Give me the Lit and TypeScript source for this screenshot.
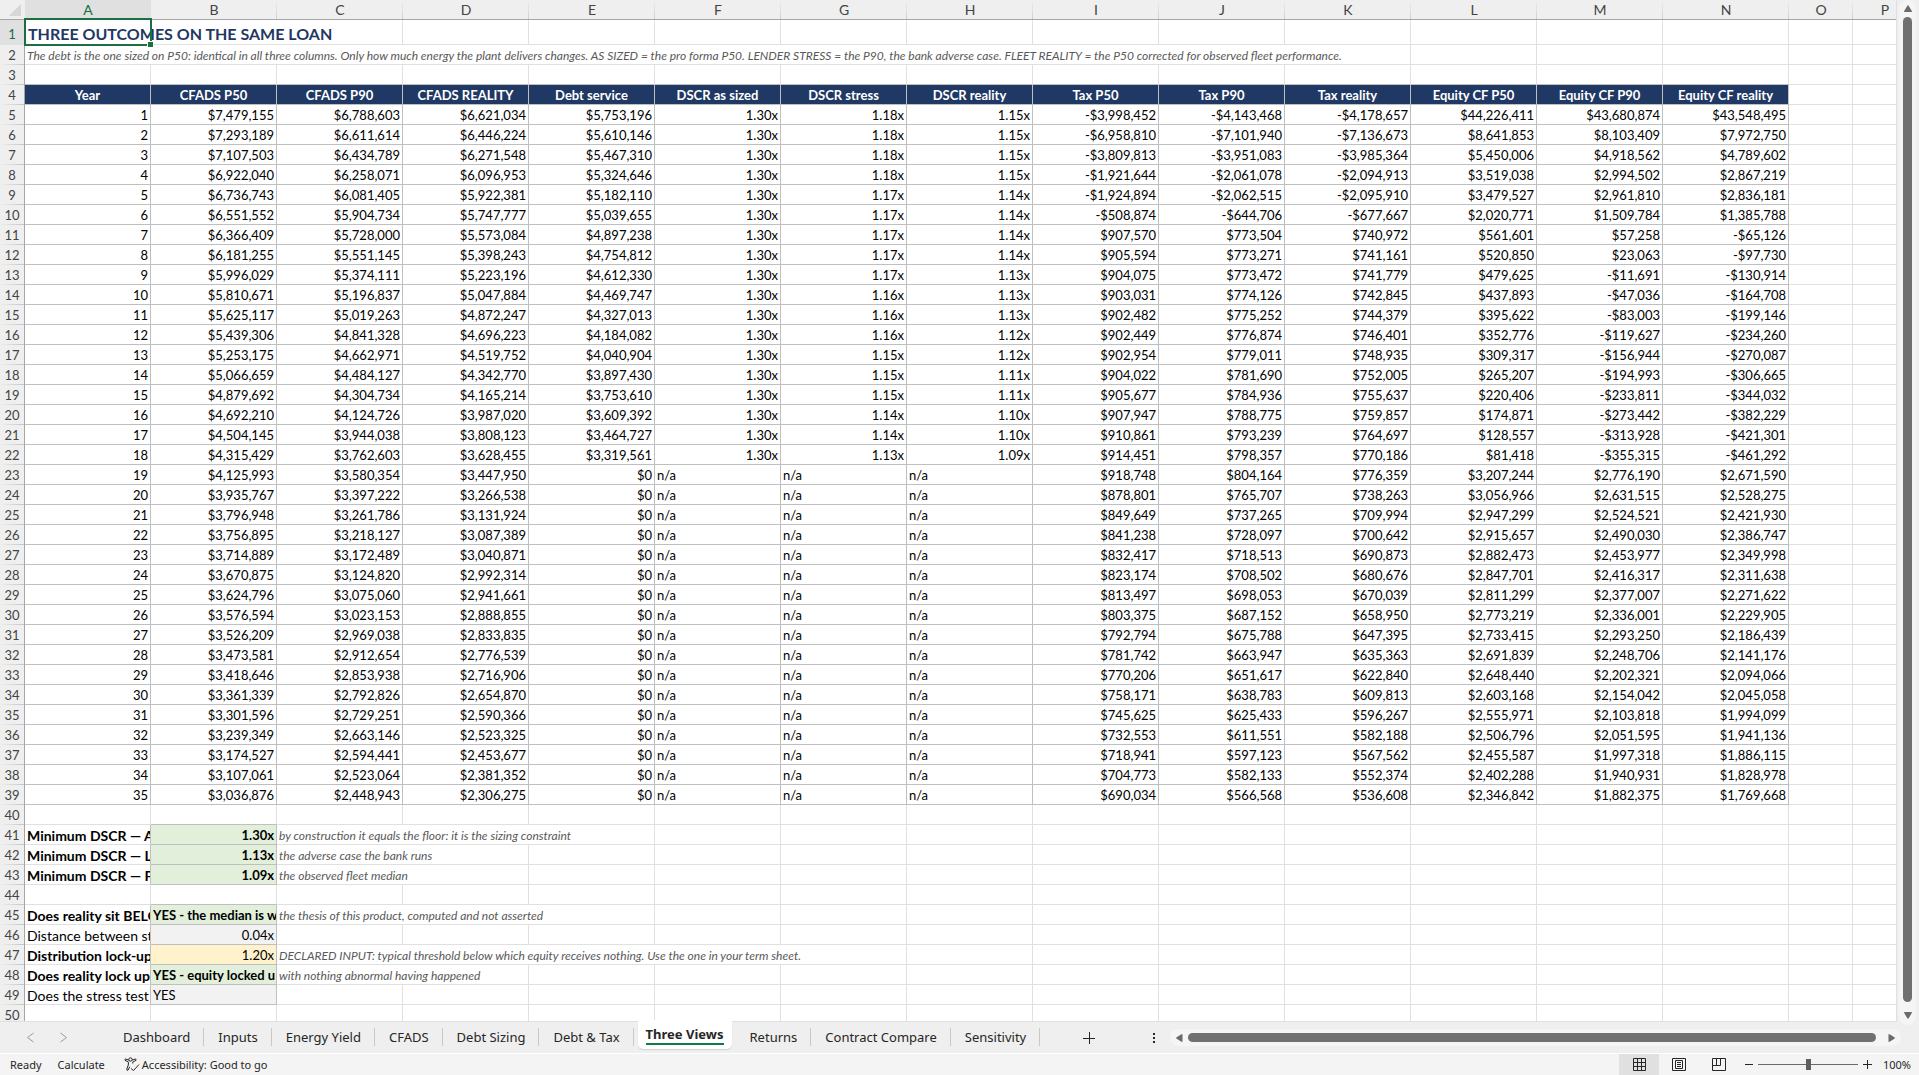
import { LitElement, html, css, svg, nothing } from "lit";
import { customElement, property } from "lit/decorators.js";
import { classMap } from "lit/directives/class-map.js";

const COLUMNS = "ABCDEFGHIJKLMNOP".split("");

const HEADINGS = [
  "Year", "CFADS P50", "CFADS P90", "CFADS REALITY", "Debt service",
  "DSCR as sized", "DSCR stress", "DSCR reality", "Tax P50", "Tax P90",
  "Tax reality", "Equity CF P50", "Equity CF P90", "Equity CF reality",
];

/* One line per year: CFADS x3, debt service, DSCR x3, tax x3, equity cash flow x3. */
const YEARS = `
7,479,155 6,788,603 6,621,034 5,753,196 1.30x 1.18x 1.15x -3,998,452 -4,143,468 -4,178,657 44,226,411 43,680,874 43,548,495
7,293,189 6,611,614 6,446,224 5,610,146 1.30x 1.18x 1.15x -6,958,810 -7,101,940 -7,136,673 8,641,853 8,103,409 7,972,750
7,107,503 6,434,789 6,271,548 5,467,310 1.30x 1.18x 1.15x -3,809,813 -3,951,083 -3,985,364 5,450,006 4,918,562 4,789,602
6,922,040 6,258,071 6,096,953 5,324,646 1.30x 1.18x 1.15x -1,921,644 -2,061,078 -2,094,913 3,519,038 2,994,502 2,867,219
6,736,743 6,081,405 5,922,381 5,182,110 1.30x 1.17x 1.14x -1,924,894 -2,062,515 -2,095,910 3,479,527 2,961,810 2,836,181
6,551,552 5,904,734 5,747,777 5,039,655 1.30x 1.17x 1.14x -508,874 -644,706 -677,667 2,020,771 1,509,784 1,385,788
6,366,409 5,728,000 5,573,084 4,897,238 1.30x 1.17x 1.14x 907,570 773,504 740,972 561,601 57,258 -65,126
6,181,255 5,551,145 5,398,243 4,754,812 1.30x 1.17x 1.14x 905,594 773,271 741,161 520,850 23,063 -97,730
5,996,029 5,374,111 5,223,196 4,612,330 1.30x 1.17x 1.13x 904,075 773,472 741,779 479,625 -11,691 -130,914
5,810,671 5,196,837 5,047,884 4,469,747 1.30x 1.16x 1.13x 903,031 774,126 742,845 437,893 -47,036 -164,708
5,625,117 5,019,263 4,872,247 4,327,013 1.30x 1.16x 1.13x 902,482 775,252 744,379 395,622 -83,003 -199,146
5,439,306 4,841,328 4,696,223 4,184,082 1.30x 1.16x 1.12x 902,449 776,874 746,401 352,776 -119,627 -234,260
5,253,175 4,662,971 4,519,752 4,040,904 1.30x 1.15x 1.12x 902,954 779,011 748,935 309,317 -156,944 -270,087
5,066,659 4,484,127 4,342,770 3,897,430 1.30x 1.15x 1.11x 904,022 781,690 752,005 265,207 -194,993 -306,665
4,879,692 4,304,734 4,165,214 3,753,610 1.30x 1.15x 1.11x 905,677 784,936 755,637 220,406 -233,811 -344,032
4,692,210 4,124,726 3,987,020 3,609,392 1.30x 1.14x 1.10x 907,947 788,775 759,857 174,871 -273,442 -382,229
4,504,145 3,944,038 3,808,123 3,464,727 1.30x 1.14x 1.10x 910,861 793,239 764,697 128,557 -313,928 -421,301
4,315,429 3,762,603 3,628,455 3,319,561 1.30x 1.13x 1.09x 914,451 798,357 770,186 81,418 -355,315 -461,292
4,125,993 3,580,354 3,447,950 0 n/a n/a n/a 918,748 804,164 776,359 3,207,244 2,776,190 2,671,590
3,935,767 3,397,222 3,266,538 0 n/a n/a n/a 878,801 765,707 738,263 3,056,966 2,631,515 2,528,275
3,796,948 3,261,786 3,131,924 0 n/a n/a n/a 849,649 737,265 709,994 2,947,299 2,524,521 2,421,930
3,756,895 3,218,127 3,087,389 0 n/a n/a n/a 841,238 728,097 700,642 2,915,657 2,490,030 2,386,747
3,714,889 3,172,489 3,040,871 0 n/a n/a n/a 832,417 718,513 690,873 2,882,473 2,453,977 2,349,998
3,670,875 3,124,820 2,992,314 0 n/a n/a n/a 823,174 708,502 680,676 2,847,701 2,416,317 2,311,638
3,624,796 3,075,060 2,941,661 0 n/a n/a n/a 813,497 698,053 670,039 2,811,299 2,377,007 2,271,622
3,576,594 3,023,153 2,888,855 0 n/a n/a n/a 803,375 687,152 658,950 2,773,219 2,336,001 2,229,905
3,526,209 2,969,038 2,833,835 0 n/a n/a n/a 792,794 675,788 647,395 2,733,415 2,293,250 2,186,439
3,473,581 2,912,654 2,776,539 0 n/a n/a n/a 781,742 663,947 635,363 2,691,839 2,248,706 2,141,176
3,418,646 2,853,938 2,716,906 0 n/a n/a n/a 770,206 651,617 622,840 2,648,440 2,202,321 2,094,066
3,361,339 2,792,826 2,654,870 0 n/a n/a n/a 758,171 638,783 609,813 2,603,168 2,154,042 2,045,058
3,301,596 2,729,251 2,590,366 0 n/a n/a n/a 745,625 625,433 596,267 2,555,971 2,103,818 1,994,099
3,239,349 2,663,146 2,523,325 0 n/a n/a n/a 732,553 611,551 582,188 2,506,796 2,051,595 1,941,136
3,174,527 2,594,441 2,453,677 0 n/a n/a n/a 718,941 597,123 567,562 2,455,587 1,997,318 1,886,115
3,107,061 2,523,064 2,381,352 0 n/a n/a n/a 704,773 582,133 552,374 2,402,288 1,940,931 1,828,978
3,036,876 2,448,943 2,306,275 0 n/a n/a n/a 690,034 566,568 536,608 2,346,842 1,882,375 1,769,668
`.trim().split("\n").map((line) => line.split(" "));

const asShown = (raw: string) =>
  /[xa]$/.test(raw) ? raw : raw.startsWith("-") ? `-$${raw.slice(1)}` : `$${raw}`;

interface Check {
  label: string;
  bold: boolean;
  value: string;
  tone: "good" | "plain" | "input";
  note?: string;
  span?: number;
}

const CHECKS: Record<number, Check> = {
  41: { label: "Minimum DSCR — A", bold: true, value: "1.30x", tone: "good", note: "by construction it equals the floor: it is the sizing constraint", span: 3 },
  42: { label: "Minimum DSCR — L", bold: true, value: "1.13x", tone: "good", note: "the adverse case the bank runs", span: 2 },
  43: { label: "Minimum DSCR — F", bold: true, value: "1.09x", tone: "good", note: "the observed fleet median", span: 2 },
  45: { label: "Does reality sit BELO", bold: true, value: "YES - the median is w", tone: "good", note: "the thesis of this product, computed and not asserted", span: 3 },
  46: { label: "Distance between str", bold: false, value: "0.04x", tone: "plain" },
  47: { label: "Distribution lock-up", bold: true, value: "1.20x", tone: "input", note: "DECLARED INPUT: typical threshold below which equity receives nothing. Use the one in your term sheet.", span: 5 },
  48: { label: "Does reality lock up", bold: true, value: "YES - equity locked u", tone: "good", note: "with nothing abnormal having happened", span: 2 },
  49: { label: "Does the stress test", bold: false, value: "YES", tone: "plain" },
};

const SHEETS = [
  "Dashboard", "Inputs", "Energy Yield", "CFADS", "Debt Sizing", "Debt & Tax",
  "Three Views", "Returns", "Contract Compare", "Sensitivity",
];

const emptyCells = (count: number, from = 0) =>
  Array.from({ length: count }, (_, i) => html`<td data-col=${COLUMNS[from + i]}></td>`);

@customElement("sheet-grid")
export class SheetGrid extends LitElement {
  static styles = css`
    :host {
      display: block;
      flex: 1;
      min-width: 0;
      overflow: hidden;
      background: #fff;
      border-right: 1px solid #e0e0e0;
      border-bottom: 1px solid #e0e0e0;
      font-family: Lato, "Open Sans", sans-serif;
      font-size: 13px;
      color: #000;
    }
    table {
      table-layout: fixed;
      border-collapse: separate;
      border-spacing: 0;
      width: 100%;
      min-width: 1917px;
    }
    .w-head { width: 25px; }
    .w-wide { width: 126px; }
    .w-narrow { width: 64px; }
    td, th {
      box-sizing: border-box;
      height: 20px;
      padding: 2px 2px 0;
      border-right: 1px solid #e0e0e0;
      border-bottom: 1px solid #e0e0e0;
      line-height: 17px;
      vertical-align: top;
      white-space: nowrap;
      overflow: hidden;
      font-weight: 400;
      text-align: left;
    }
    .letter, .number, .corner {
      background: #efefef;
      color: #444;
      text-align: center;
    }
    .letter, .corner {
      line-height: 19px;
      border-bottom-color: #a6a6a6;
      border-right: 0;
      padding: 0;
      font-size: 14px;
    }
    .letter {
      background: linear-gradient(#efefef, #d0d0d0) right / 1px 100% no-repeat #efefef;
    }
    .number {
      padding: 2px 0 0;
      border-bottom: 0;
      border-right-color: #a6a6a6;
      background: linear-gradient(to right, #efefef, #c4c4c4) bottom / 100% 1px no-repeat #efefef;
    }
    .letter.on, .number.on {
      background: #e0e0e0;
      color: #0f703b;
    }
    .corner svg {
      display: block;
      margin: 4px 0 0 9px;
    }
    .tall td, .tall th { height: 25px; }
    .tall .number { padding-top: 6px; }
    .title {
      position: relative;
      overflow: visible;
      padding: 3px 3px 0;
      line-height: 21px;
      font-size: 16px;
      font-weight: 700;
      color: #1f3864;
    }
    .cursor {
      position: absolute;
      left: -1px;
      top: -2px;
      box-sizing: border-box;
      width: 128px;
      height: 28px;
      border: 2px solid #1b7043;
    }
    .cursor::after {
      content: "";
      position: absolute;
      right: -4px;
      bottom: -4px;
      width: 5px;
      height: 5px;
      border: 1px solid #fff;
      background: #1b7043;
    }
    .note {
      font-size: 12px;
      font-style: italic;
      color: #595959;
    }
    .above, .heading, .figure { border-bottom-color: #bfbfbf; }
    .heading {
      border-right-color: #bfbfbf;
      background: #203864;
      color: #fff;
      font-weight: 700;
      text-align: center;
    }
    .figure { border-right-color: #bfbfbf; }
    .right { text-align: right; }
    .bold { font-weight: 700; }
    .label {
      border-right-color: #bfbfbf;
      font-size: 14px;
    }
    .good { background: #e2efda; }
    .plain { background: #f2f2f2; }
    .input { background: #fff2cc; }
  `;

  private cells(row: number) {
    if (row === 1) {
      return html`<td class="title" colspan="3">THREE OUTCOMES ON THE SAME LOAN<span class="cursor"></span></td>${emptyCells(13, 3)}`;
    }
    if (row === 2) {
      return html`<td class="note" colspan="11">The debt is the one sized on P50: identical in all three columns. Only how much energy the plant delivers changes. AS SIZED = the pro forma P50. LENDER STRESS = the P90, the bank adverse case. FLEET REALITY = the P50 corrected for observed fleet performance.</td>${emptyCells(5, 11)}`;
    }
    if (row === 3) {
      return html`${HEADINGS.map(() => html`<td class="above"></td>`)}${emptyCells(2, 14)}`;
    }
    if (row === 4) {
      return html`${HEADINGS.map((h) => html`<th class="heading" scope="col">${h}</th>`)}${emptyCells(2, 14)}`;
    }
    if (row <= 39) {
      const year = row - 4;
      return html`<td class="figure right">${year}</td>${YEARS[year - 1].map(
        (raw) => html`<td class=${classMap({ figure: true, right: raw !== "n/a" })}>${asShown(raw)}</td>`,
      )}${emptyCells(2, 14)}`;
    }
    const check = CHECKS[row];
    if (!check) {
      return html`<td></td><td class=${classMap({ above: row === 40 || row === 44 })}></td>${emptyCells(14, 2)}`;
    }
    const span = check.note ? check.span ?? 1 : 0;
    return html`
      <td class=${classMap({ label: true, bold: check.bold })}>${check.label}</td>
      <td class=${classMap({
        figure: true,
        [check.tone]: true,
        bold: check.tone === "good",
        right: check.value.endsWith("x"),
      })}>${check.value}</td>
      ${span ? html`<td class="note" colspan=${span}>${check.note}</td>` : nothing}
      ${emptyCells(14 - span, 2 + span)}
    `;
  }

  render() {
    return html`
      <table aria-label="Three Views">
        <colgroup>
          <col class="w-head" />
          ${COLUMNS.map((c) => html`<col class=${c < "O" ? "w-wide" : "w-narrow"} />`)}
        </colgroup>
        <thead>
          <tr>
            <th class="corner">
              <svg width="12" height="12" viewBox="0 0 12 12" aria-hidden="true"><path d="M12 0V12H0Z" fill="#d6d6d6" /></svg>
            </th>
            ${COLUMNS.map((c) => html`<th scope="col" class=${classMap({ letter: true, on: c === "A" })}>${c}</th>`)}
          </tr>
        </thead>
        <tbody>
          ${Array.from({ length: 50 }, (_, i) => i + 1).map(
            (row) => html`<tr class=${row === 1 ? "tall" : nothing}>
              <th scope="row" class=${classMap({ number: true, on: row === 1 })}>${row}</th>
              ${this.cells(row)}
            </tr>`,
          )}
        </tbody>
      </table>
    `;
  }
}

const ARROWS: Record<string, string> = {
  up: "M5 2Q5.5 2 9 8.5Q9 9 8.5 9H1.5Q1 9 1 8.5Q4.500 2 5 2Z",
  down: "M5 8Q5.500 8 9 1.500Q9 1 8.500 1H1.500Q1 1 1 1.500Q4.500 8 5 8Z",
  left: "M2 5Q2 4.500 8 1Q8.500 1 8.500 1.500V8.500Q8.500 9 8 9Q2 5.500 2 5Z",
  right: "M8 5Q8 4.500 2 1Q1.500 1 1.500 1.500V8.500Q1.500 9 2 9Q8 5.500 8 5Z",
};

@customElement("scroll-strip")
export class ScrollStrip extends LitElement {
  @property({ reflect: true }) axis: "x" | "y" = "y";

  static styles = css`
    :host {
      display: flex;
      align-items: center;
      background: #f5f5f5;
      border-radius: 9px;
      box-sizing: border-box;
    }
    :host([axis="y"]) {
      flex-direction: column;
      width: 17px;
      padding: 3px 0 4px;
    }
    :host([axis="x"]) {
      height: 17px;
      padding: 0 4px;
    }
    button {
      display: flex;
      padding: 0;
      border: 0;
      background: none;
    }
    .thumb {
      flex: 1;
      border-radius: 5px;
      background: #707070;
    }
    .thumb.y { width: 9px; margin: 4px 0 9px; }
    .thumb.x { height: 9px; margin: 0 11px 0 4px; }
  `;

  private arrow(name: string) {
    return html`<button type="button" aria-label="Scroll ${name}">
      <svg width="10" height="10" viewBox="0 0 10 10" aria-hidden="true"><path d=${ARROWS[name]} fill="#6b6b6b" /></svg>
    </button>`;
  }

  render() {
    const [back, forward] = this.axis === "y" ? ["up", "down"] : ["left", "right"];
    return html`${this.arrow(back)}<div class="thumb ${this.axis}"></div>${this.arrow(forward)}`;
  }
}

const icon = (w: number, h: number, body: unknown) =>
  html`<svg width=${w} height=${h} viewBox="0 0 ${w} ${h}" fill="none" stroke="#262626" aria-hidden="true">${body}</svg>`;

@customElement("app-root")
export class AppRoot extends LitElement {
  static styles = css`
    :host {
      display: flex;
      flex-direction: column;
      height: 100vh;
      overflow: hidden;
      background: #efefef;
      font-family: "Noto Sans", "Open Sans", sans-serif;
      font-size: 13px;
      color: #262626;
    }
    button {
      padding: 0;
      border: 0;
      background: none;
      font: inherit;
      color: inherit;
    }
    .body {
      display: flex;
      flex: 1;
      min-height: 0;
    }
    .rail {
      display: flex;
      padding: 0 3px 0 2px;
      margin-bottom: -3px;
      z-index: 1;
    }
    .tabbar {
      display: flex;
      align-items: center;
      height: 31px;
    }
    .paging {
      display: flex;
      gap: 22px;
      padding-left: 25px;
      width: 84px;
    }
    .paging button, .add, .more { display: flex; }
    .sheets {
      display: flex;
      align-items: stretch;
      height: 31px;
    }
    .sheet {
      display: flex;
      align-items: center;
      padding: 0 14px 2px;
      line-height: 18px;
      background: linear-gradient(#c8c8c8, #c8c8c8) right 6px / 1px 18px no-repeat;
    }
    .sheet.on {
      position: relative;
      align-items: flex-start;
      margin: -2px 4px 4px;
      padding: 5px 8px 0;
      background: #fff;
      border-radius: 0 0 5px 5px;
      box-shadow: 0 1px 1px #d0d0d0;
      font-weight: 700;
    }
    .sheet.on span { border-bottom: 2px solid #107c41; }
    .add { margin-left: 43px; }
    .more { margin-left: 53px; }
    .hscroll {
      flex: 1;
      margin: 0 18px 0 10px;
    }
    .status {
      display: flex;
      align-items: center;
      height: 21px;
      border-top: 1px solid #fff;
      background: #f4f4f4;
      padding-left: 10px;
      font-size: 11px;
      line-height: 20px;
    }
    .calc { margin-left: 16px; }
    .access {
      display: flex;
      align-items: center;
      gap: 2px;
      margin-left: 19px;
    }
    .view {
      display: flex;
      align-items: center;
      justify-content: center;
      width: 40px;
      height: 21px;
    }
    .view.first { margin-left: auto; }
    .view.on { background: #e0e0e0; }
    .zoom {
      display: flex;
      align-items: center;
      gap: 5px;
      margin-left: 6px;
    }
    .zoom button { display: flex; }
    .range {
      appearance: none;
      width: 100px;
      height: 13px;
      margin: 0;
      background: linear-gradient(#6b6b6b, #6b6b6b) center / 100% 1px no-repeat;
    }
    .range::-webkit-slider-thumb {
      appearance: none;
      width: 5px;
      height: 11px;
      background: #5f5f5f;
    }
    .percent {
      width: 47px;
      padding-right: 8px;
      box-sizing: border-box;
      text-align: right;
    }
  `;

  render() {
    return html`
      <div class="body">
        <sheet-grid></sheet-grid>
        <div class="rail"><scroll-strip axis="y"></scroll-strip></div>
      </div>
      <nav class="tabbar" aria-label="Sheets">
        <div class="paging">
          <button type="button" aria-label="Previous sheets">${icon(11, 11, svg`<path d="M8.500 1L2.500 5.500L8.500 10" stroke="#9a9a9a" />`)}</button>
          <button type="button" aria-label="Next sheets">${icon(11, 11, svg`<path d="M2.500 1L8.500 5.500L2.500 10" stroke="#9a9a9a" />`)}</button>
        </div>
        <div class="sheets">
          ${SHEETS.map((name) => html`<button type="button" class=${classMap({ sheet: true, on: name === "Three Views" })}><span>${name}</span></button>`)}
        </div>
        <button type="button" class="add" aria-label="New sheet">${icon(12, 12, svg`<path d="M6.500 0V12M0 6.500H12" />`)}</button>
        <button type="button" class="more" aria-label="More">${icon(12, 12, svg`<path d="M5 1h2v2h-2zM5 5h2v2h-2zM5 9h2v2h-2z" fill="#262626" stroke="none" />`)}</button>
        <scroll-strip class="hscroll" axis="x"></scroll-strip>
      </nav>
      <footer class="status">
        <span>Ready</span>
        <span class="calc">Calculate</span>
        <button type="button" class="access">
          ${icon(16, 15, svg`<circle cx="6.500" cy="2.500" r="1.700" /><path d="M4.800 3.200L1.700 2Q.500 2 1 3.300L4.500 5.200L4.300 8L2.700 12.300Q2.700 13.700 4 13.200L5.800 9.700M8.200 3.200L11.300 2Q12.500 2 12 3.300L8.700 5.200V6.500M7 11.500L9.500 13.500L15 7.500" />`)}
          <span>Accessibility: Good to go</span>
        </button>
        <button type="button" class="view first on" aria-label="Normal">${icon(13, 13, svg`<path d="M.5 .5H12.500V12.500H.5ZM4.500 .5V12.500M8.500 .5V12.500M.5 4.500H12.500M.5 8.500H12.500" />`)}</button>
        <button type="button" class="view" aria-label="Page Layout">${icon(14, 13, svg`<path d="M.5 .5H13.500V12.500H.5ZM3.500 2.500H10.500V10.500H3.500ZM5 4.500H9M5 6.500H9M5 8.500H9" />`)}</button>
        <button type="button" class="view" aria-label="Page Break Preview">${icon(14, 13, svg`<path d="M.5 .5H13.500V12.500H.5ZM.5 7.500H8.500V.5M4.500 .5V7.500" />`)}</button>
        <div class="zoom">
          <button type="button" aria-label="Zoom out">${icon(8, 9, svg`<path d="M0 4.500H8" />`)}</button>
          <input class="range" type="range" min="10" max="190" .value=${"100"} aria-label="Zoom" />
          <button type="button" aria-label="Zoom in">${icon(9, 9, svg`<path d="M0 4.500H9M4.500 0V9" />`)}</button>
        </div>
        <span class="percent">100%</span>
      </footer>
    `;
  }
}
